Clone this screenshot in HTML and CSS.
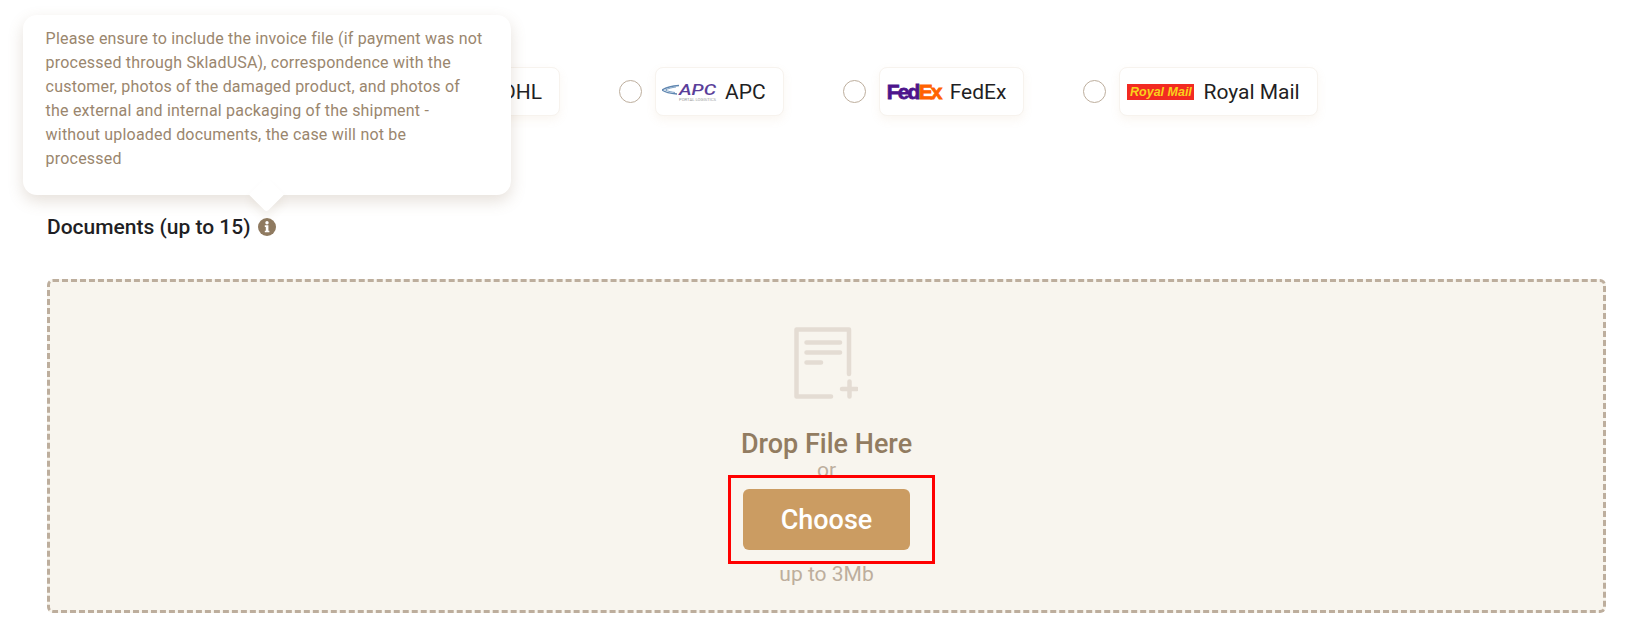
FILE: index.html
```html
<!DOCTYPE html>
<html lang="en">
<head>
<meta charset="utf-8">
<title>Documents</title>
<link rel="stylesheet" href="styles.css">
</head>
<body>
<main class="page">
  <div class="carriers">
    <label class="carrier carrier-dhl"><span class="radio"></span><span class="card"><span class="card-text">DHL</span></span></label>
    <label class="carrier"><span class="radio"></span><span class="card">
      <svg class="logo-apc" width="55" height="20" viewBox="0 0 55 20" aria-hidden="true">
        <path d="M17 3.500C10 4 4 5.500 0 8C3 10.500 9 11.500 15 12" fill="none" stroke="#5f86b0" stroke-width="1.300"/>
        <path d="M14 5C10 5.500 6 6.500 3.500 8C6 9.500 10 10 13 10.500" fill="none" stroke="#7fa3c6" stroke-width="1"/>
        <text x="17" y="12.500" class="apc-mark" textLength="37" lengthAdjust="spacingAndGlyphs">APC</text>
        <text x="17" y="18.500" class="apc-sub" textLength="37" lengthAdjust="spacingAndGlyphs">PORTAL LOGISTICS</text>
      </svg>
      <span class="card-text">APC</span></span></label>
    <label class="carrier"><span class="radio"></span><span class="card">
      <span class="logo-fedex"><span class="fed">Fed</span><span class="ex">Ex</span></span>
      <span class="card-text">FedEx</span></span></label>
    <label class="carrier"><span class="radio"></span><span class="card">
      <span class="logo-royal">Royal Mail</span>
      <span class="card-text">Royal Mail</span></span></label>
  </div>

  <div class="doc-heading">
    <h2 class="doc-title">Documents (up to 15)</h2>
    <span class="info">
      <svg width="18" height="18" viewBox="0 0 18 18" aria-hidden="true">
        <circle cx="9" cy="9" r="9" fill="#8f7a60"/>
        <circle cx="9" cy="4.700" r="1.700" fill="#fff"/>
        <path d="M6.800 7.300H10.400V12.700H11.400V14.300H6.800V12.700H7.800V8.900H6.800Z" fill="#fff"/>
      </svg>
      <span class="tooltip">Please ensure to include the invoice file (if payment was not processed through SkladUSA), correspondence with the customer, photos of the damaged product, and photos of the external and internal packaging of the shipment - without uploaded documents, the case will not be processed</span>
    </span>
  </div>

  <section class="dropzone">
    <svg class="file-icon" width="64" height="72" viewBox="0 0 64 72" aria-hidden="true">
      <g fill="none" stroke="#e4dcd3" stroke-width="4.500" stroke-linecap="round" stroke-linejoin="round">
        <path d="M55 47V2.500H2.500V69.500H37"/>
        <path d="M12.500 15.500H46M12.500 25.500H46M12.500 35.500H27"/>
        <path d="M48 62H63M55.500 54.500V69.500"/>
      </g>
    </svg>
    <div class="drop-title">Drop File Here</div>
    <div class="drop-or">or</div>
    <div class="choose-wrap">
      <button class="choose" type="button">Choose</button>
      <span class="highlight"></span>
    </div>
    <div class="drop-limit">up to 3Mb</div>
  </section>
</main>
</body>
</html>
```
FILE: styles.css
```css
* { box-sizing: border-box; }
html, body { margin: 0; padding: 0; background: #fff; }
body { font-family: Roboto, "Liberation Sans", sans-serif; color: #1f1f24; }
.page { width: 1637px; height: 635px; padding: 67px 31px 0 47px; overflow: hidden; }

.carriers { display: flex; align-items: center; height: 49px; }
.carrier { display: flex; align-items: center; gap: 13px; margin-right: 59px; }
.carrier-dhl { margin-left: 412px; }
.radio { width: 23px; height: 23px; border: 1.500px solid #bdae9d; border-radius: 50%; background: #fff; flex: none; }
.card { display: flex; align-items: center; height: 49px; padding: 0 17px 0 6px; gap: 8px; background: #fff; border: 1px solid #f7f3ee; border-radius: 8px; box-shadow: 0 4px 10px rgba(203, 170, 120, .1); }
.card-text { font-size: 21px; line-height: 24px; color: #1f1f24; }

.apc-mark { font: italic 500 15.500px Roboto, sans-serif; fill: #5a3e9a; }
.apc-sub { font: 400 3.800px Roboto, sans-serif; fill: #9a9a9a; }
.logo-fedex { font-family: "Liberation Sans", sans-serif; font-weight: 700; font-size: 21px; line-height: 20px; letter-spacing: -1.800px; width: 55px; margin-left: 1px; -webkit-text-stroke: .8px currentColor; white-space: nowrap; }
.fed { color: #4d148c; }
.ex { color: #ff6200; }
.logo-royal { width: 67px; height: 16px; margin: 0 1px; background: #f22a22; color: #f9d21c; font: italic 700 12.500px/16px "Liberation Sans", sans-serif; text-align: center; white-space: nowrap; }

.doc-heading { display: flex; align-items: center; gap: 7px; height: 26px; margin-top: 98px; }
.doc-title { margin: 0; font-size: 21px; font-weight: 500; line-height: 26px; color: #1f1f24; }
.info { position: relative; display: flex; width: 18px; height: 18px; }
.tooltip { position: absolute; left: -235px; bottom: 41px; width: 488px; height: 180px; padding: 12px 26px 0 23px; background: #fff; border-radius: 14px; box-shadow: 0 6px 16px rgba(130, 100, 70, .2); font-size: 16px; letter-spacing: .2px; line-height: 24px; color: #9a866e; }
.tooltip::after { content: ""; position: absolute; left: 231px; bottom: -12px; width: 25px; height: 25px; background: #fff; transform: rotate(45deg); border-radius: 0 0 3px 0; box-shadow: 5px 5px 8px rgba(130, 100, 70, .08); }

.dropzone { display: flex; flex-direction: column; align-items: center; height: 334px; margin-top: 39px; padding-top: 45px; background: #f8f5ee; border: 3px dashed #bdae9d; border-radius: 6px; }
.file-icon { flex: none; margin-left: -1px; }
.drop-title { margin-top: 30px; font-size: 27px; font-weight: 500; line-height: 30px; color: #927c61; }
.drop-or { font-size: 21px; line-height: 24px; color: #bdae9d; margin-top: -1px; height: 31px; }
.choose-wrap { position: relative; display: flex; }
.choose { width: 167px; height: 61px; border: 0; border-radius: 6px; background: #cb9c62; color: #fff; font-family: Roboto, sans-serif; font-size: 27px; font-weight: 500; }
.highlight { position: absolute; left: -15px; top: -14px; width: 207px; height: 89px; border: 3px solid #f00; }
.drop-limit { margin-top: 12px; font-size: 21px; line-height: 24px; color: #bdae9d; }
```
